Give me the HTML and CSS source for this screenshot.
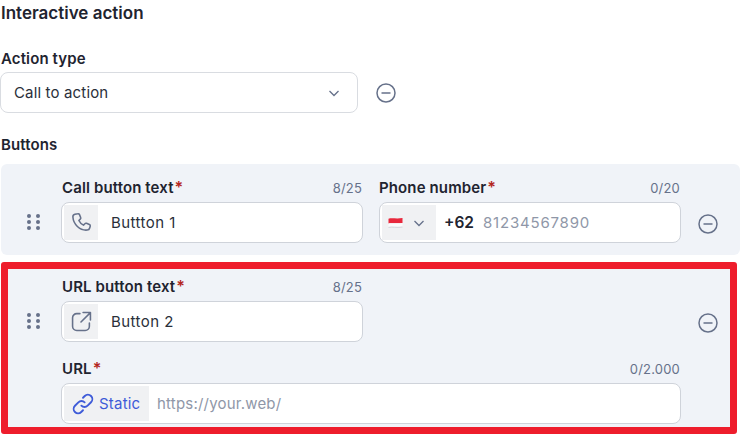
FILE: index.html
```html
<!DOCTYPE html>
<html>

<head>
  <link rel="stylesheet" href="styles.css">
</head>

<body>
  <h1 class="title">Interactive action</h1>

  <div class="label type-label">Action type</div>
  <div class="type-row">
    <div class="select">
      <span>Call to action</span>
      <svg class="chevron" width="14" height="14" viewBox="0 0 14 14"><path d="M2.500 5l4.500 4.500L11.500 5"/></svg>
    </div>
    <svg class="minus" viewBox="0 0 20 20"><circle cx="10" cy="10" r="9"/><path d="M5.500 10h9"/></svg>
  </div>

  <div class="label buttons-label">Buttons</div>

  <div class="panel call-panel">
    <svg class="drag" viewBox="0 0 14 16"><circle cx="2" cy="2" r="2"/><circle cx="11" cy="2" r="2"/><circle cx="2" cy="8" r="2"/><circle cx="11" cy="8" r="2"/><circle cx="2" cy="14" r="2"/><circle cx="11" cy="14" r="2"/></svg>
    <div class="field">
      <div class="field-head"><span class="label">Call button text<b>*</b></span><span class="count">8/25</span></div>
      <div class="input">
        <span class="addon icon-addon">
          <svg class="addon-icon" viewBox="0 0 20 20"><path d="M6.400 1.700c.7-.2 1.400.1 1.700.8l1.100 2.700c.2.600.1 1.200-.4 1.600L7.500 8.100c.9 1.900 2.400 3.400 4.400 4.400l1.300-1.300c.4-.5 1-.6 1.600-.4l2.700 1.100c.7.300 1 1 .8 1.700l-.5 1.700c-.3 1.200-1.400 2-2.600 1.900C8.300 17.700 2.300 11.700 1.800 4.800c-.1-1.200.7-2.300 1.900-2.600z"/></svg>
        </span>
        <span class="value">Buttton 1</span>
      </div>
    </div>
    <div class="field phone-field">
      <div class="field-head"><span class="label">Phone number<b>*</b></span><span class="count">0/20</span></div>
      <div class="input">
        <span class="addon flag-addon">
          <svg class="flag" width="15" height="12" viewBox="0 0 15 12"><path d="M.5 1.700C4 .5 8 2.200 14.500 1v5C8 7 4 5.500.5 6.500z" fill="#e8283c"/><path d="M.5 6.500C4 5.500 8 7 14.500 6v4C8 11 4 9.400.5 10.400z" fill="#fbfbfc"/><path d="M.5 10.400C4 9.400 8 11 14.500 10" stroke="#c9ccd2" stroke-width=".8"/></svg>
          <svg class="chevron" width="14" height="14" viewBox="0 0 14 14"><path d="M2.500 5l4.500 4.500L11.500 5"/></svg>
        </span>
        <span class="dial">+62</span>
        <span class="placeholder">81234567890</span>
      </div>
    </div>
    <svg class="minus" viewBox="0 0 20 20"><circle cx="10" cy="10" r="9"/><path d="M5.500 10h9"/></svg>
  </div>

  <div class="red-box">
    <div class="url-top">
      <svg class="drag" viewBox="0 0 14 16"><circle cx="2" cy="2" r="2"/><circle cx="11" cy="2" r="2"/><circle cx="2" cy="8" r="2"/><circle cx="11" cy="8" r="2"/><circle cx="2" cy="14" r="2"/><circle cx="11" cy="14" r="2"/></svg>
      <div class="field">
        <div class="field-head"><span class="label">URL button text<b>*</b></span><span class="count">8/25</span></div>
        <div class="input">
          <span class="addon icon-addon">
            <svg class="addon-icon" viewBox="0 0 20 20"><path d="M8.500 2.500H5.500a4 4 0 0 0-4 4v8a4 4 0 0 0 4 4h8a4 4 0 0 0 4-4v-3M11.500 1.500h7v7M18.500 1.500L9.500 10.500"/></svg>
          </span>
          <span class="value">Button 2</span>
        </div>
      </div>
      <svg class="minus" viewBox="0 0 20 20"><circle cx="10" cy="10" r="9"/><path d="M5.500 10h9"/></svg>
    </div>
    <div class="url-field">
      <div class="field-head"><span class="label">URL<b>*</b></span><span class="count">0/2.000</span></div>
      <div class="input">
        <span class="addon static-addon">
          <svg class="link" viewBox="0 0 20 20"><path d="M8.500 11.500a4 4 0 0 0 5.700 0l3.100-3.100a4 4 0 0 0-5.700-5.700L10 4.300M11.500 8.500a4 4 0 0 0-5.700 0l-3.100 3.100a4 4 0 0 0 5.700 5.700L10 15.700"/></svg>
          Static
        </span>
        <span class="placeholder url-placeholder">https://your.web/</span>
      </div>
    </div>
  </div>
</body>

</html>
```

FILE: styles.css
```css
* {
  box-sizing: border-box;
}

body {
  margin: 0;
  background-color: #fff;
  font-family: Inter, "Liberation Sans", sans-serif;
  color: #1f2430;
  overflow: hidden;
}

svg {
  display: block;
  flex: none;
  fill: none;
}

.title {
  margin: 0;
  padding: 4px 0 0 1px;
  font-size: 17px;
  line-height: 19px;
  font-weight: 600;
}

.label {
  font-size: 15px;
  line-height: 17px;
  font-weight: 600;
  letter-spacing: 0.120px;
}

.label b {
  margin-left: 1px;
  font-size: 16px;
  line-height: 16px;
  color: #b3261e;
  font-weight: 600;
}

.type-label {
  margin-top: 27px;
  padding-left: 1px;
}

.type-row {
  display: flex;
  align-items: center;
  gap: 18px;
  margin-top: 5px;
}

.select {
  display: flex;
  align-items: center;
  justify-content: space-between;
  width: 358px;
  height: 41px;
  padding: 0 16px 0 13px;
  background-color: #fff;
  border: 1px solid #d9dce1;
  border-radius: 8px;
  font-size: 15px;
  letter-spacing: 0.150px;
  color: #2a2f3a;
}

.chevron path {
  stroke: #66718a;
  stroke-width: 1.300;
}

.minus {
  width: 20px;
  height: 20px;
}

.minus circle,
.minus path {
  stroke: #66718a;
  stroke-width: 1.500;
}

.buttons-label {
  margin-top: 23px;
  padding-left: 1px;
}

.panel {
  display: flex;
  align-items: flex-start;
  width: 739px;
  height: 91px;
  margin: 11px 0 0 1px;
  padding: 15px 0 0 26px;
  background-color: #f0f3f8;
  border-radius: 6px;
}

.drag {
  width: 14px;
  height: 16px;
  margin-top: 35px;
  fill: #66718a;
}

.field {
  width: 302px;
}

.drag + .field {
  margin-left: 20px;
}

.field + .field {
  margin-left: 16px;
}

.field-head {
  display: flex;
  align-items: center;
  justify-content: space-between;
  height: 17px;
  padding: 0 1px;
}

.phone-field .field-head {
  padding-left: 0;
}

.count {
  font-size: 13px;
  letter-spacing: 0.200px;
  color: #66718a;
}

.input {
  display: flex;
  align-items: stretch;
  height: 41px;
  margin-top: 6px;
  padding: 2px;
  background-color: #fff;
  border: 1px solid #cfd3da;
  border-radius: 8px;
  font-size: 15px;
}

.addon {
  display: flex;
  align-items: center;
  background-color: #f0f1f3;
}

.icon-addon {
  justify-content: center;
  width: 34px;
}

.addon-icon {
  width: 21px;
  height: 21px;
}

.addon-icon path {
  stroke: #66718a;
  stroke-width: 1.500;
  stroke-linecap: round;
  stroke-linejoin: round;
}

.value {
  align-self: center;
  margin-left: 13px;
  color: #2a2f3a;
  letter-spacing: 0.450px;
}

.flag-addon {
  gap: 9px;
  width: 54px;
  padding-left: 6px;
}

.dial {
  align-self: center;
  margin-left: 8px;
  font-size: 15.500px;
  font-weight: 600;
}

.placeholder {
  align-self: center;
  margin-left: 9px;
  color: #8f97a8;
  letter-spacing: 0.800px;
}

.call-panel > .minus {
  margin: 35px 0 0 17px;
}

.red-box {
  width: 736px;
  height: 172px;
  margin: 7px 0 0 1px;
  padding: 9px 0 0 19px;
  background-color: #f0f3f8;
  border: 7px solid #ee1d2c;
  border-radius: 3px;
}

.url-top {
  display: flex;
  align-items: flex-start;
}

.url-top > .minus {
  margin: 35px 0 0 335px;
}

.url-field {
  width: 620px;
  margin: 18px 0 0 34px;
}

.static-addon {
  gap: 5px;
  width: 85px;
  padding-left: 8px;
  letter-spacing: 0.200px;
  color: #3e5bd8;
}

.link {
  width: 22px;
  height: 22px;
}

.link path {
  stroke: #3e5bd8;
  stroke-width: 1.700;
  stroke-linecap: round;
  stroke-linejoin: round;
}

.url-placeholder {
  margin-left: 8px;
  letter-spacing: 0.200px;
}
```
